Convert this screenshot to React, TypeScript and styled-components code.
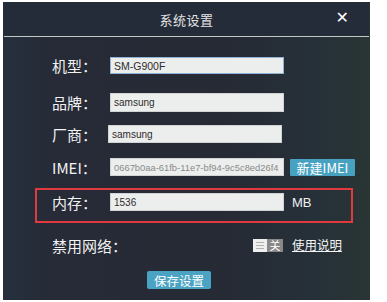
import styled, { createGlobalStyle } from "styled-components";

const GlobalStyle = createGlobalStyle`
  html, body {
    margin: 0;
    padding: 0;
    background: #fff;
  }
  body {
    font-family: "Noto Sans CJK SC", "Noto Sans", sans-serif;
  }
`;

export default function App() {
  return (
    <>
      <GlobalStyle />
      <Dialog>
        <TitleBar>
          <Title>系统设置</Title>
          <CloseButton>✕</CloseButton>
        </TitleBar>
        <Body>
          <Row $top={20} $height={17}>
            <Label>机型：</Label>
            <Field $focused readOnly defaultValue="SM-G900F" $size={10.5} />
          </Row>
          <Row $top={19} $height={19}>
            <Label>品牌：</Label>
            <Field readOnly defaultValue="samsung" $size={10} />
          </Row>
          <Row $top={13} $height={18}>
            <Label $width={56}>厂商：</Label>
            <Field readOnly defaultValue="samsung" $size={10} />
          </Row>
          <Row $top={15} $height={18}>
            <Label>IMEI：</Label>
            <Field
              readOnly
              defaultValue="0667b0aa-61fb-11e7-bf94-9c5c8ed26f4"
              $size={9.4}
              $muted
            />
            <SmallButton>新建IMEI</SmallButton>
          </Row>
          <Highlight>
            <Row $top={0} $height={18} $inset={15}>
              <Label>内存：</Label>
              <Field readOnly defaultValue="1536" $size={10} />
              <Unit>MB</Unit>
            </Row>
          </Highlight>
          <Row $top={15} $height={14} $spread>
            <Label>禁用网络：</Label>
            <Options>
              <Toggle>
                <ToggleHandle>
                  <Bars>
                    <span />
                    <span />
                    <span />
                  </Bars>
                </ToggleHandle>
                <ToggleState>关</ToggleState>
              </Toggle>
              <HelpLink>使用说明</HelpLink>
            </Options>
          </Row>
          <SaveButton>保存设置</SaveButton>
        </Body>
      </Dialog>
    </>
  );
}

const Dialog = styled.div`
  margin: 2px 0 0 3px;
  width: 367px;
  height: 298px;
  display: flex;
  flex-direction: column;
  background: linear-gradient(
    to right,
    #25303e 0%,
    #262b37 12%,
    #262a35 60%,
    #263039 85%,
    #2a3534 100%
  );
  color: #eee;
  overflow: hidden;
`;

const TitleBar = styled.div`
  height: 34px;
  display: flex;
  align-items: center;
  justify-content: center;
  position: relative;
  border-bottom: 1px solid #c4c8c2;
  margin: 0 1px;
  background: #252c39;
`;

const Title = styled.div`
  font-size: 13px;
  color: #e4e4e4;
  letter-spacing: 0.5px;
`;

const CloseButton = styled.div`
  position: absolute;
  right: 20px;
  top: 6px;
  font-family: "DejaVu Sans", sans-serif;
  font-size: 16px;
  font-weight: bold;
  color: #fff;
`;

const Body = styled.div`
  display: flex;
  flex-direction: column;
`;

const Row = styled.div<{
  $top: number;
  $height: number;
  $inset?: number;
  $spread?: boolean;
}>`
  display: flex;
  align-items: center;
  height: ${(p) => p.$height}px;
  margin-top: ${(p) => p.$top}px;
  padding-left: ${(p) => (p.$inset !== undefined ? p.$inset : 49)}px;
  padding-right: ${(p) => (p.$spread ? 28 : 0)}px;
  justify-content: ${(p) => (p.$spread ? "space-between" : "flex-start")};
`;

const Label = styled.div<{ $width?: number }>`
  width: ${(p) => p.$width ?? 58}px;
  flex-shrink: 0;
  font-size: 15px;
  color: #f2f2f2;
  white-space: nowrap;
  line-height: 1;
`;

const Field = styled.input<{
  $size: number;
  $muted?: boolean;
  $focused?: boolean;
}>`
  box-sizing: border-box;
  width: 174px;
  height: 100%;
  margin: 0;
  padding: 0 3px;
  border: 1px solid ${(p) => (p.$focused ? "#8fb3d6" : "#cfd3d3")};
  background: #eceeed;
  font-family: "Liberation Sans", "DejaVu Sans", sans-serif;
  font-size: ${(p) => p.$size}px;
  color: ${(p) => (p.$muted ? "#8a8a8a" : "#2c2c2c")};
  outline: none;
`;

const SmallButton = styled.div`
  margin-left: 6px;
  width: 65px;
  height: 17px;
  display: flex;
  align-items: center;
  justify-content: center;
  background: #47a2c2;
  color: #fff;
  font-size: 13px;
  border-radius: 1px;
  white-space: nowrap;
`;

const Highlight = styled.div`
  margin: 12px 0 0 32px;
  width: 318px;
  box-sizing: border-box;
  height: 35px;
  padding-top: 3px;
  border: 2px solid #e03a3e;
`;

const Unit = styled.div`
  margin-left: 8px;
  font-family: "Liberation Sans", sans-serif;
  font-size: 13px;
  color: #f0f0f0;
`;

const Options = styled.div`
  display: flex;
  align-items: center;
`;

const Toggle = styled.div`
  display: flex;
  height: 13px;
`;

const ToggleHandle = styled.div`
  width: 14px;
  background: #efefef;
  display: flex;
  align-items: center;
  justify-content: center;
`;

const Bars = styled.div`
  display: flex;
  flex-direction: column;
  gap: 2px;
  span {
    display: block;
    width: 8px;
    height: 1px;
    background: #b0b0b0;
  }
`;

const ToggleState = styled.div`
  width: 16px;
  background: #888;
  color: #fff;
  font-size: 11px;
  line-height: 13px;
  text-align: center;
`;

const HelpLink = styled.div`
  margin-left: 9px;
  font-size: 12.5px;
  color: #f4f4f4;
  text-decoration: underline;
  line-height: 1;
`;

const SaveButton = styled.div`
  margin: 19px 0 0 144px;
  width: 64px;
  height: 18px;
  display: flex;
  align-items: center;
  justify-content: center;
  background: #4ba3c3;
  color: #fff;
  font-size: 12.5px;
  border-radius: 2px;
`;
